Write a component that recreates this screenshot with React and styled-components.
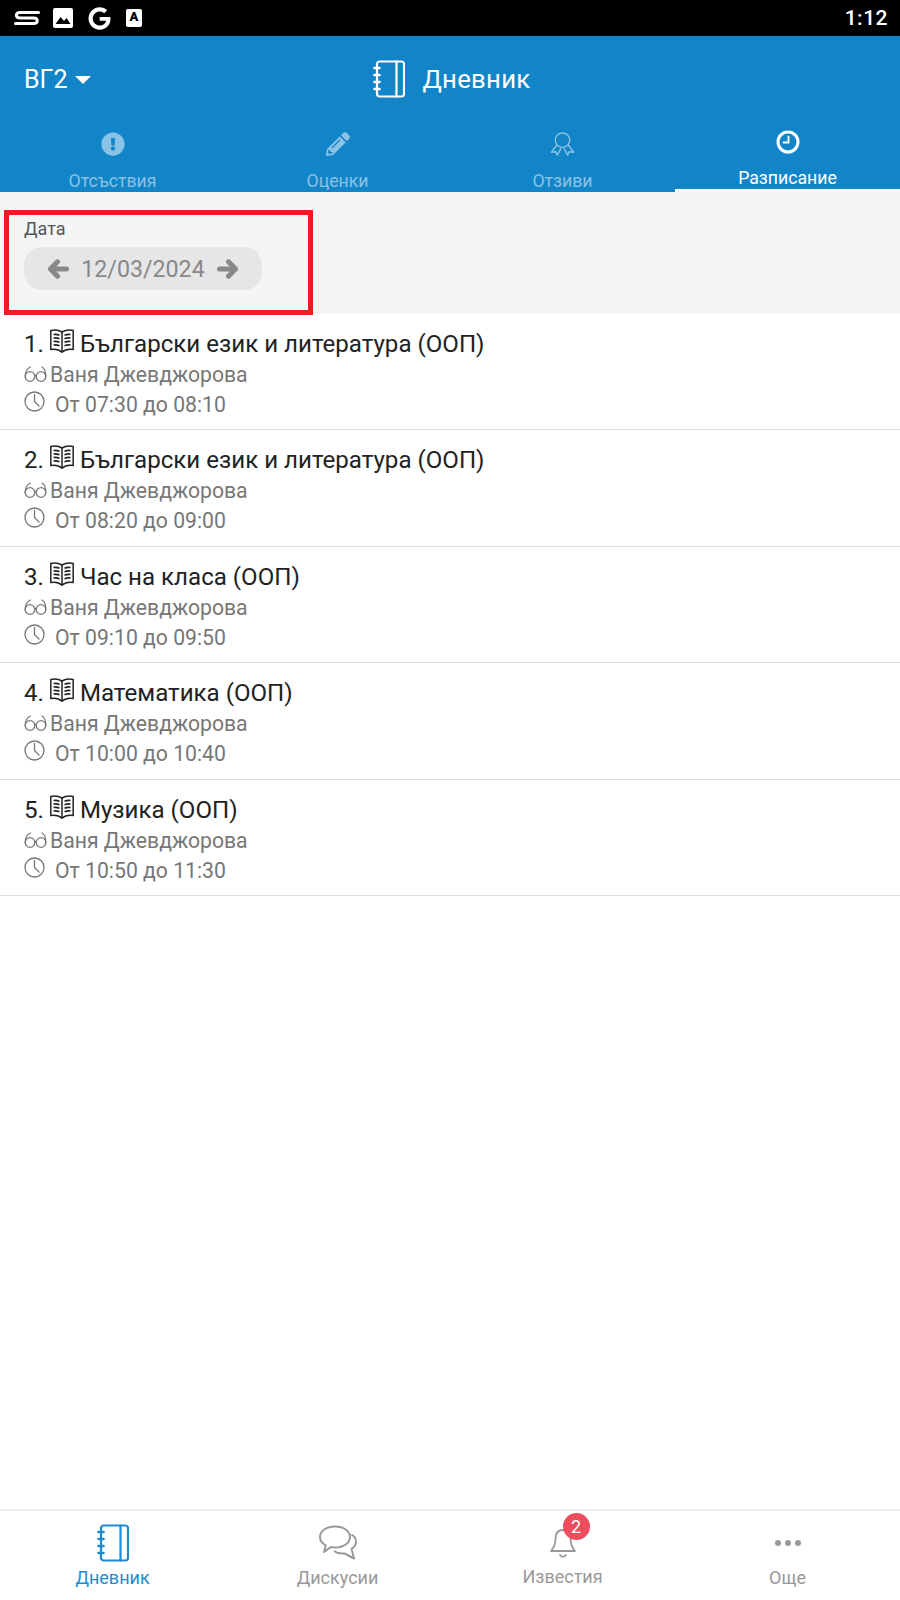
import React from 'react';
import styled, { createGlobalStyle } from 'styled-components';
import { FaExclamationCircle, FaPencilAlt, FaGoogle } from 'react-icons/fa';

const GlobalStyle = createGlobalStyle`
    html, body {
        margin: 0;
        padding: 0;
        background: #fff;
    }
    * {
        box-sizing: border-box;
    }
`;

const lessons = [
    { id: 1, name: 'Български език и литература (ООП)', time: 'От 07:30 до 08:10' },
    { id: 2, name: 'Български език и литература (ООП)', time: 'От 08:20 до 09:00' },
    { id: 3, name: 'Час на класа (ООП)', time: 'От 09:10 до 09:50' },
    { id: 4, name: 'Математика (ООП)', time: 'От 10:00 до 10:40' },
    { id: 5, name: 'Музика (ООП)', time: 'От 10:50 до 11:30' },
];

const Notebook = ({ size = 34 }) => (
    <svg width={size} height={size * 38 / 32} viewBox="0 0 32 38" fill="none" stroke="currentColor" strokeWidth="2.2" strokeLinecap="round" strokeLinejoin="round">
        <rect x="4" y="1.5" width="27" height="35" rx="2.5" />
        <path d="M23.5 1.5v35" />
        <path d="M1.5 8h5M1.5 15h5M1.5 22h5M1.5 29h5" strokeWidth="2.6" />
    </svg>
);

const BookIcon = () => (
    <svg width="24" height="24" viewBox="0 0 24 24" fill="none" stroke="#222" strokeWidth="1.5" strokeLinejoin="round">
        <path d="M.8 1.500c4-.8 8-.4 11.200 1.500 3.200-1.900 7.200-2.300 11.200-1.500v19c-4-.8-8-.2-11.200 2.700-3.200-2.900-7.200-3.500-11.200-2.700z" />
        <path d="M12 3v20" />
        <path d="M3.500 5.500c2-.3 4-.1 6 .7M3.500 9c2-.3 4-.1 6 .7M3.500 12.500c2-.3 4-.1 6 .7M3.500 16c2-.3 4-.1 6 .7M14.500 6.200c2-.8 4-1 6-.7M14.500 9.700c2-.8 4-1 6-.7M14.500 13.200c2-.8 4-1 6-.7M14.500 16.700c2-.8 4-1 6-.7" strokeWidth="1.600" />
    </svg>
);

const Glasses = () => (
    <svg width="23" height="16" viewBox="0 0 23 16" fill="none" stroke="#777" strokeWidth="1.300" strokeLinecap="round">
        <circle cx="6" cy="10.500" r="4.800" />
        <circle cx="17" cy="10.500" r="4.800" />
        <path d="M10.500 10c.7-.8 1.300-.8 2 0" />
        <path d="M1.200 10.500C1.200 6 3 2.500 6.500 1M21.800 10.500C21.800 6 21 2.500 18 1" />
    </svg>
);

const ClockOutline = () => (
    <svg width="21" height="21" viewBox="0 0 21 21" fill="none" stroke="#777" strokeWidth="1.300" strokeLinecap="round" strokeLinejoin="round">
        <circle cx="10.500" cy="10.500" r="9.500" />
        <path d="M10.500 3.500v7l4.500 4.500" />
    </svg>
);

const Ribbon = () => (
    <svg width="25" height="26" viewBox="0 0 26 26" fill="none" stroke="currentColor" strokeWidth="1.500" strokeLinejoin="round">
        <circle cx="13" cy="9" r="7.500" />
        <path d="M7 14L1.500 21.500l4.500-.5 1.500 3.500 4-7M19 14l5.500 7.500-4.500-.5-1.500 3.500-4-7" />
    </svg>
);

const ClockSolid = () => (
    <svg width="24" height="24" viewBox="0 0 24 24" fill="none" stroke="currentColor" strokeLinecap="round">
        <circle cx="12" cy="12" r="10" strokeWidth="3" />
        <path d="M12.500 6.500v6H7.500" strokeWidth="1.800" />
    </svg>
);

const Chat = () => (
    <svg width="38" height="36" viewBox="0 0 38 36" fill="none" stroke="#999" strokeWidth="2" strokeLinejoin="round">
        <path d="M16 1.500c8.500 0 15 4.500 15 10.500s-6.500 10.500-15 10.500c-1.400 0-2.800-.1-4.200-.4L5 27l1.800-6.500C3.200 18.500 1 15.500 1 12 1 6 7.500 1.500 16 1.500z" />
        <path d="M32.500 9.500c2.700 1.700 4.500 4.300 4.500 7.200 0 3-1.800 5.500-4.500 7.100L35 33.500 25.500 28.500c-3.800.4-7.500-.2-10.500-2.500" />
    </svg>
);

const Bell = () => (
    <svg width="26" height="32" viewBox="0 0 26 32" fill="none" stroke="#999" strokeWidth="1.800" strokeLinejoin="round" strokeLinecap="round">
        <path d="M13 3c-5 0-7.500 3.500-7.500 8.500 0 6-1.500 9-4.500 12.500h24c-3-3.500-4.500-6.500-4.500-12.500C20.500 6.500 18 3 13 3z" />
        <path d="M10 28c1 2.200 5 2.200 6 0" />
    </svg>
);

const Arrow = ({ right }) => (
    <svg width="21" height="20" viewBox="0 0 21 20" fill="none" stroke="currentColor" strokeWidth="5" strokeLinecap="round" strokeLinejoin="round">
        {right
            ? <path d="M11.500 2.800L18.500 10l-7 7.200M18 10H2.500" />
            : <path d="M9.500 2.800L2.500 10l7 7.200M3 10h15.500" />}
    </svg>
);

const StatusBar = styled.div`
    height: 36px;
    background: #000;
    display: flex;
    align-items: center;
    justify-content: space-between;
    padding: 0 12px 0 14px;
    color: #fff;
`;

const StatusIcons = styled.div`
    display: flex;
    align-items: center;
    gap: 13px;
`;

const GoogleMark = styled(FaGoogle)`
    margin: 0 2px;
`;

const AppIconBox = styled.div`
    width: 16px;
    height: 18px;
    background: #fff;
    border-radius: 2px;
    color: #000;
    font: 900 13px/15px "Roboto", sans-serif;
    text-align: center;
`;

const Clock = styled.span`
    font: 500 21px "Roboto", sans-serif;
    letter-spacing: 0.5px;
`;

const Header = styled.header`
    background: #1285c9;
    color: #fff;
    height: 156px;
    display: flex;
    flex-direction: column;
`;

const TopRow = styled.div`
    height: 84px;
    position: relative;
    display: flex;
    align-items: center;
    justify-content: center;
    padding: 2px 0 0 4px;
`;

const ClassPicker = styled.div`
    position: absolute;
    left: 24px;
    top: 29px;
    display: flex;
    align-items: center;
    gap: 7px;
    font: 400 25px "Roboto", sans-serif;
`;

const Caret = styled.span`
    width: 0;
    height: 0;
    border-left: 8px solid transparent;
    border-right: 8px solid transparent;
    border-top: 8px solid #fff;
`;

const Title = styled.div`
    display: flex;
    align-items: center;
    gap: 17px;
    font: 400 25.700px "Roboto", sans-serif;
    letter-spacing: 0.3px;
`;

const Tabs = styled.nav`
    flex: 1;
    display: grid;
    grid-template-columns: repeat(4, 1fr);
`;

const Tab = styled.div`
    display: flex;
    flex-direction: column;
    align-items: center;
    justify-content: flex-start;
    padding-top: ${p => (p.$active ? '9px' : '11px')};
    color: ${p => (p.$active ? '#fff' : 'rgba(255,255,255,0.5)')};
    border-bottom: ${p => (p.$active ? '3px solid #fff' : 'none')};
`;

const TabIcon = styled.div`
    height: 26px;
    display: flex;
    align-items: center;
    justify-content: center;
    font-size: 24px;
`;

const TabLabel = styled.span`
    margin-top: ${p => (p.$active ? '13px' : '14px')};
    font: 400 17.700px/20px "Roboto", sans-serif;
`;

const Filter = styled.section`
    height: 122px;
    background: #f5f5f5;
    padding: 18px 0 0 4px;
`;

const Highlight = styled.div`
    width: 309px;
    height: 105px;
    border: 5px solid #ed1c24;
    padding: 4px 0 0 15px;
`;

const FilterLabel = styled.div`
    font: 400 18px/20px "Roboto", sans-serif;
    color: #555;
`;

const DatePill = styled.div`
    margin-top: 8px;
    width: 238px;
    height: 43px;
    border-radius: 18px;
    background: #e6e6e6;
    color: #888;
    display: flex;
    align-items: center;
    justify-content: center;
    gap: 12px;
    font: 400 23.200px "Roboto", sans-serif;
`;

const Row = styled.div`
    height: 116.400px;
    padding: 15px 24px 0;
    border-bottom: 1px solid #dcdcdc;
`;

const RowTitle = styled.div`
    display: flex;
    align-items: center;
    height: 30px;
    gap: 6px;
    font: 400 24.100px/30px "Roboto", sans-serif;
    color: #222;

    svg {
        margin-bottom: 6px;
    }
`;

const RowMeta = styled.div`
    display: flex;
    align-items: center;
    height: 28px;
    gap: ${p => p.$gap}px;
    margin-top: ${p => p.$top || 0}px;
    font: 400 21.200px/28px "Roboto", sans-serif;
    color: #777;

    svg {
        margin-bottom: ${p => p.$lift || 0}px;
    }
`;

const Spacer = styled.div`
    flex: 1;
`;

const Page = styled.div`
    width: 900px;
    height: 1600px;
    display: flex;
    flex-direction: column;
    overflow: hidden;
    background: #fff;
`;

const BottomNav = styled.nav`
    height: 91px;
    border-top: 2px solid #eee;
    display: grid;
    grid-template-columns: repeat(4, 1fr);
`;

const NavItem = styled.div`
    display: flex;
    flex-direction: column;
    align-items: center;
    color: ${p => (p.$active ? '#1e8bd0' : '#999')};
    padding-top: 12px;
`;

const NavIcon = styled.div`
    position: relative;
    height: 40px;
    display: flex;
    align-items: center;
    justify-content: center;
`;

const NavLabel = styled.span`
    margin-top: ${p => p.$top ?? 5}px;
    font: 400 18px/20px "Roboto", sans-serif;
`;

const Badge = styled.span`
    position: absolute;
    top: -10px;
    left: 13px;
    width: 27px;
    height: 27px;
    border-radius: 50%;
    background: #ec4e5e;
    color: #fff;
    font: 400 18px/27px "Roboto", sans-serif;
    text-align: center;
`;

const Dots = styled.div`
    display: flex;
    gap: 4px;
    span {
        width: 6px;
        height: 6px;
        border-radius: 50%;
        background: #999;
    }
`;

export default function App() {
    return (
        <Page>
            <GlobalStyle />
            <StatusBar>
                <StatusIcons>
                    <svg width="26" height="16" viewBox="0 0 26 16" fill="none" stroke="#fff" strokeWidth="3" strokeLinecap="round">
                        <path d="M24.500 2.500H6.500C1 2.500 1 8 6.500 8h13c5 0 5 5.500 0 5.500H1.500" />
                    </svg>
                    <svg width="20" height="20" viewBox="0 0 20 20">
                        <rect width="20" height="20" rx="2" fill="#fff" />
                        <path d="M2.500 16l5-7 3.500 4 2.500-3 4 6z" fill="#000" />
                    </svg>
                    <GoogleMark size={23} />
                    <AppIconBox>A</AppIconBox>
                </StatusIcons>
                <Clock>1:12</Clock>
            </StatusBar>
            <Header>
                <TopRow>
                    <ClassPicker>ВГ2<Caret /></ClassPicker>
                    <Title><Notebook size={32} />Дневник</Title>
                </TopRow>
                <Tabs>
                    <Tab>
                        <TabIcon><FaExclamationCircle /></TabIcon>
                        <TabLabel>Отсъствия</TabLabel>
                    </Tab>
                    <Tab>
                        <TabIcon><FaPencilAlt /></TabIcon>
                        <TabLabel>Оценки</TabLabel>
                    </Tab>
                    <Tab>
                        <TabIcon><Ribbon /></TabIcon>
                        <TabLabel>Отзиви</TabLabel>
                    </Tab>
                    <Tab $active>
                        <TabIcon><ClockSolid /></TabIcon>
                        <TabLabel $active>Разписание</TabLabel>
                    </Tab>
                </Tabs>
            </Header>
            <Filter>
                <Highlight>
                    <FilterLabel>Дата</FilterLabel>
                    <DatePill>
                        <Arrow />
                        12/03/2024
                        <Arrow right />
                    </DatePill>
                </Highlight>
            </Filter>
            {lessons.map(lesson => (
                <Row key={lesson.id}>
                    <RowTitle>{lesson.id}.<BookIcon />{lesson.name}</RowTitle>
                    <RowMeta $gap={3} $top={2} $lift={2}><Glasses />Ваня Джевджорова</RowMeta>
                    <RowMeta $gap={10} $top={2} $lift={7}><ClockOutline />{lesson.time}</RowMeta>
                </Row>
            ))}
            <Spacer />
            <BottomNav>
                <NavItem $active>
                    <NavIcon><Notebook size={32} /></NavIcon>
                    <NavLabel>Дневник</NavLabel>
                </NavItem>
                <NavItem>
                    <NavIcon><Chat /></NavIcon>
                    <NavLabel>Дискусии</NavLabel>
                </NavItem>
                <NavItem>
                    <NavIcon><Bell /><Badge>2</Badge></NavIcon>
                    <NavLabel $top={4}>Известия</NavLabel>
                </NavItem>
                <NavItem>
                    <NavIcon><Dots><span /><span /><span /></Dots></NavIcon>
                    <NavLabel>Още</NavLabel>
                </NavItem>
            </BottomNav>
        </Page>
    );
}
